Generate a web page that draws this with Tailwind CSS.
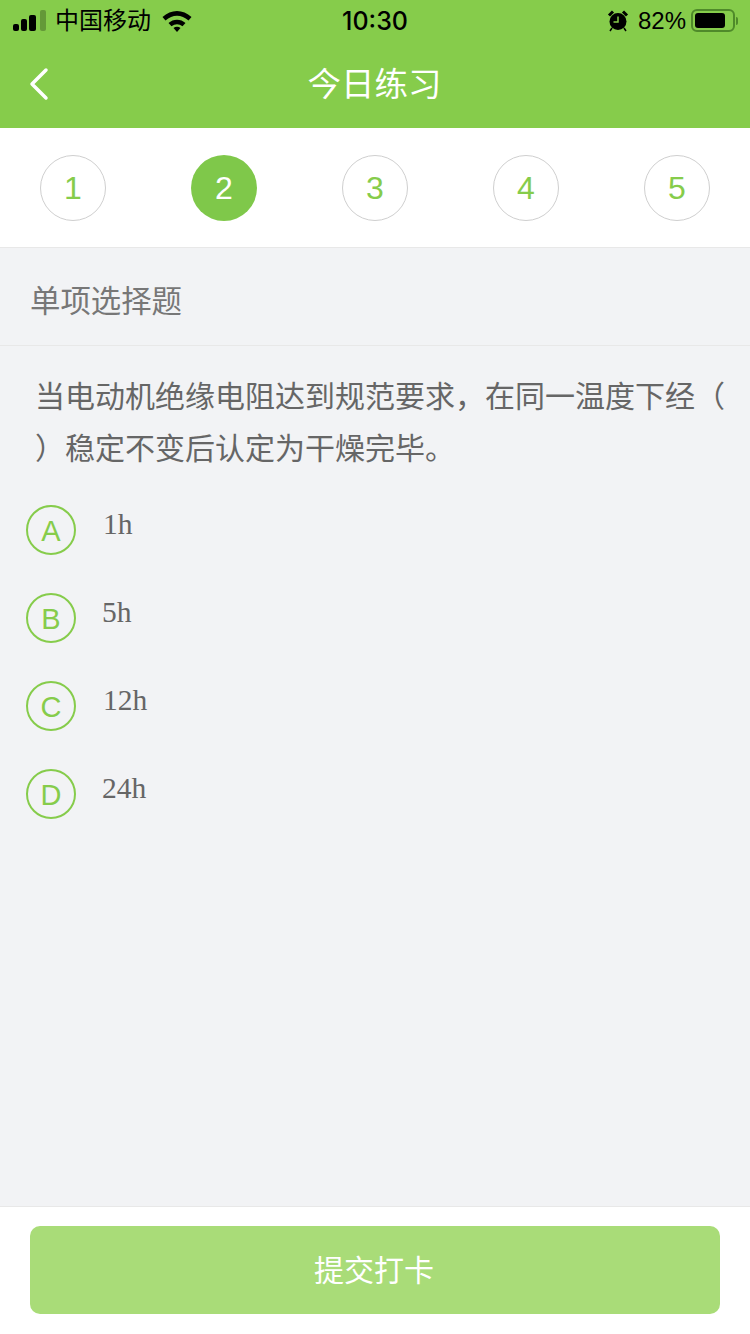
<!DOCTYPE html>
<html lang="zh"><head><meta charset="utf-8"><script src="https://cdn.jsdelivr.net/npm/@tailwindcss/browser@4"></script></head>
<body class="m-0">
<div class="w-[750px] h-[1334px] flex flex-col bg-[#f2f3f5] overflow-hidden font-['Liberation_Sans','Noto_Sans_CJK_SC',sans-serif]">
  <header class="h-[128px] shrink-0 bg-[#86cc4b] flex flex-col">
    <div class="h-[40px] flex items-center justify-between pl-[13px] pr-[12px] pt-[1px] text-black relative">
      <div class="flex items-center">
        <svg width="34" height="24" viewBox="0 0 34 24" class="mr-[8px]"><rect x="0" y="15" width="6" height="7" rx="2" fill="#000"/><rect x="8" y="10" width="6" height="12" rx="2" fill="#000"/><rect x="16" y="6" width="7" height="16" rx="2" fill="#000"/><rect x="27" y="1" width="6" height="21" rx="2" fill="#000" opacity=".25"/></svg>
        <span class="text-[24px] leading-[30px] mr-[11px]">中国移动</span>
        <svg width="30" height="24" viewBox="0 0 30 24"><path d="M0.5 8C9 0 21 0 29.500 8L26.500 11.500C19.500 5 10.500 5 3.500 11.500Z M6.500 14C11 9.500 19 9.500 23.500 14L20.500 17.300C17 14.500 13 14.500 9.500 17.300Z M11.500 19C13.500 17.300 16.500 17.300 18.500 19L15 23Z" fill="#000"/></svg>
      </div>
      <span class="absolute left-0 right-0 text-center text-[25px] leading-[40px] font-medium font-['Inter',sans-serif]">10:30</span>
      <div class="flex items-center">
        <svg width="22" height="24" viewBox="0 0 22 24" class="mr-[9px]"><circle cx="11" cy="12.500" r="8.500" fill="#000"/><path d="M11 7.500V13H6.500" stroke="#86cc4b" stroke-width="1.500" fill="none"/><path d="M2 6.500L6 2.500 M20 6.500L16 2.500" stroke="#000" stroke-width="3"/><path d="M5 19L3 22 M17 19L19 22" stroke="#000" stroke-width="1.500"/></svg>
        <span class="text-[24px] leading-[30px] mr-[5px]">82%</span>
        <div class="w-[44px] h-[23px] rounded-[6px] border-2 border-[#4f8a2a] p-[2px] flex"><div class="w-[30px] h-full bg-black rounded-[3px]"></div></div>
        <div class="w-[2px] h-[8px] bg-[#4f8a2a] ml-[1px] rounded-r"></div>
      </div>
    </div>
    <div class="flex-1 relative flex items-center justify-center">
      <svg class="absolute left-[28px] top-[27px]" width="22" height="34" viewBox="0 0 22 34"><path d="M18 3L4 17L18 31" fill="none" stroke="#fff" stroke-width="3.500" stroke-linecap="round" stroke-linejoin="round"/></svg>
      <h1 class="m-0 pt-[1px] pr-[1px] text-[33.500px] leading-[44px] font-normal text-white">今日练习</h1>
    </div>
  </header>
  <nav class="h-[120px] shrink-0 bg-white border-b border-[#e8e8e8] px-[40px] flex items-center justify-between">
    <div class="w-[66px] h-[66px] rounded-full border border-[#cfcfcf] flex items-center justify-center text-[32px] text-[#86cc4b]">1</div>
    <div class="w-[66px] h-[66px] rounded-full bg-[#7fc84a] flex items-center justify-center text-[32px] text-white">2</div>
    <div class="w-[66px] h-[66px] rounded-full border border-[#cfcfcf] flex items-center justify-center text-[32px] text-[#86cc4b]">3</div>
    <div class="w-[66px] h-[66px] rounded-full border border-[#cfcfcf] flex items-center justify-center text-[32px] text-[#86cc4b]">4</div>
    <div class="w-[66px] h-[66px] rounded-full border border-[#cfcfcf] flex items-center justify-center text-[32px] text-[#86cc4b]">5</div>
  </nav>
  <div class="h-[98px] shrink-0 border-b border-[#e8e8e8] pl-[30px] pt-[10px] flex items-center text-[30.400px] text-[#777]">单项选择题</div>
  <p class="m-0 pl-[35px] pt-[25px] text-[30px] leading-[52px] text-[#666] whitespace-nowrap">当电动机绝缘电阻达到规范要求，在同一温度下经（<br>）稳定不变后认定为干燥完毕。</p>
  <ul class="m-0 p-0 pl-[26px] mt-[30px] flex flex-col gap-[38px] list-none flex-1">
    <li class="flex h-[50px]"><span class="w-[50px] h-[50px] rounded-full border-2 border-[#86cc4b] flex items-center justify-center text-[29px] text-[#86cc4b] pt-[3px]">A</span><span class="ml-[27px] text-[29.500px] leading-[38px] text-[#666] font-['Liberation_Serif',serif]">1h</span></li>
    <li class="flex h-[50px]"><span class="w-[50px] h-[50px] rounded-full border-2 border-[#86cc4b] flex items-center justify-center text-[29px] text-[#86cc4b] pt-[3px]">B</span><span class="ml-[26px] text-[29.500px] leading-[38px] text-[#666] font-['Liberation_Serif',serif]">5h</span></li>
    <li class="flex h-[50px]"><span class="w-[50px] h-[50px] rounded-full border-2 border-[#86cc4b] flex items-center justify-center text-[29px] text-[#86cc4b] pt-[3px]">C</span><span class="ml-[27px] text-[29.500px] leading-[38px] text-[#666] font-['Liberation_Serif',serif]">12h</span></li>
    <li class="flex h-[50px]"><span class="w-[50px] h-[50px] rounded-full border-2 border-[#86cc4b] flex items-center justify-center text-[29px] text-[#86cc4b] pt-[3px]">D</span><span class="ml-[26px] text-[29.500px] leading-[38px] text-[#666] font-['Liberation_Serif',serif]">24h</span></li>
  </ul>
  <footer class="h-[128px] shrink-0 bg-white border-t border-[#e8e8e8] px-[30px] pt-[19px]">
    <button class="w-[690px] h-[88px] rounded-[10px] bg-[#a9dc78] text-white text-[30px] pt-[1px] pr-[2px] flex items-center justify-center">提交打卡</button>
  </footer>
</div>
</body></html>
